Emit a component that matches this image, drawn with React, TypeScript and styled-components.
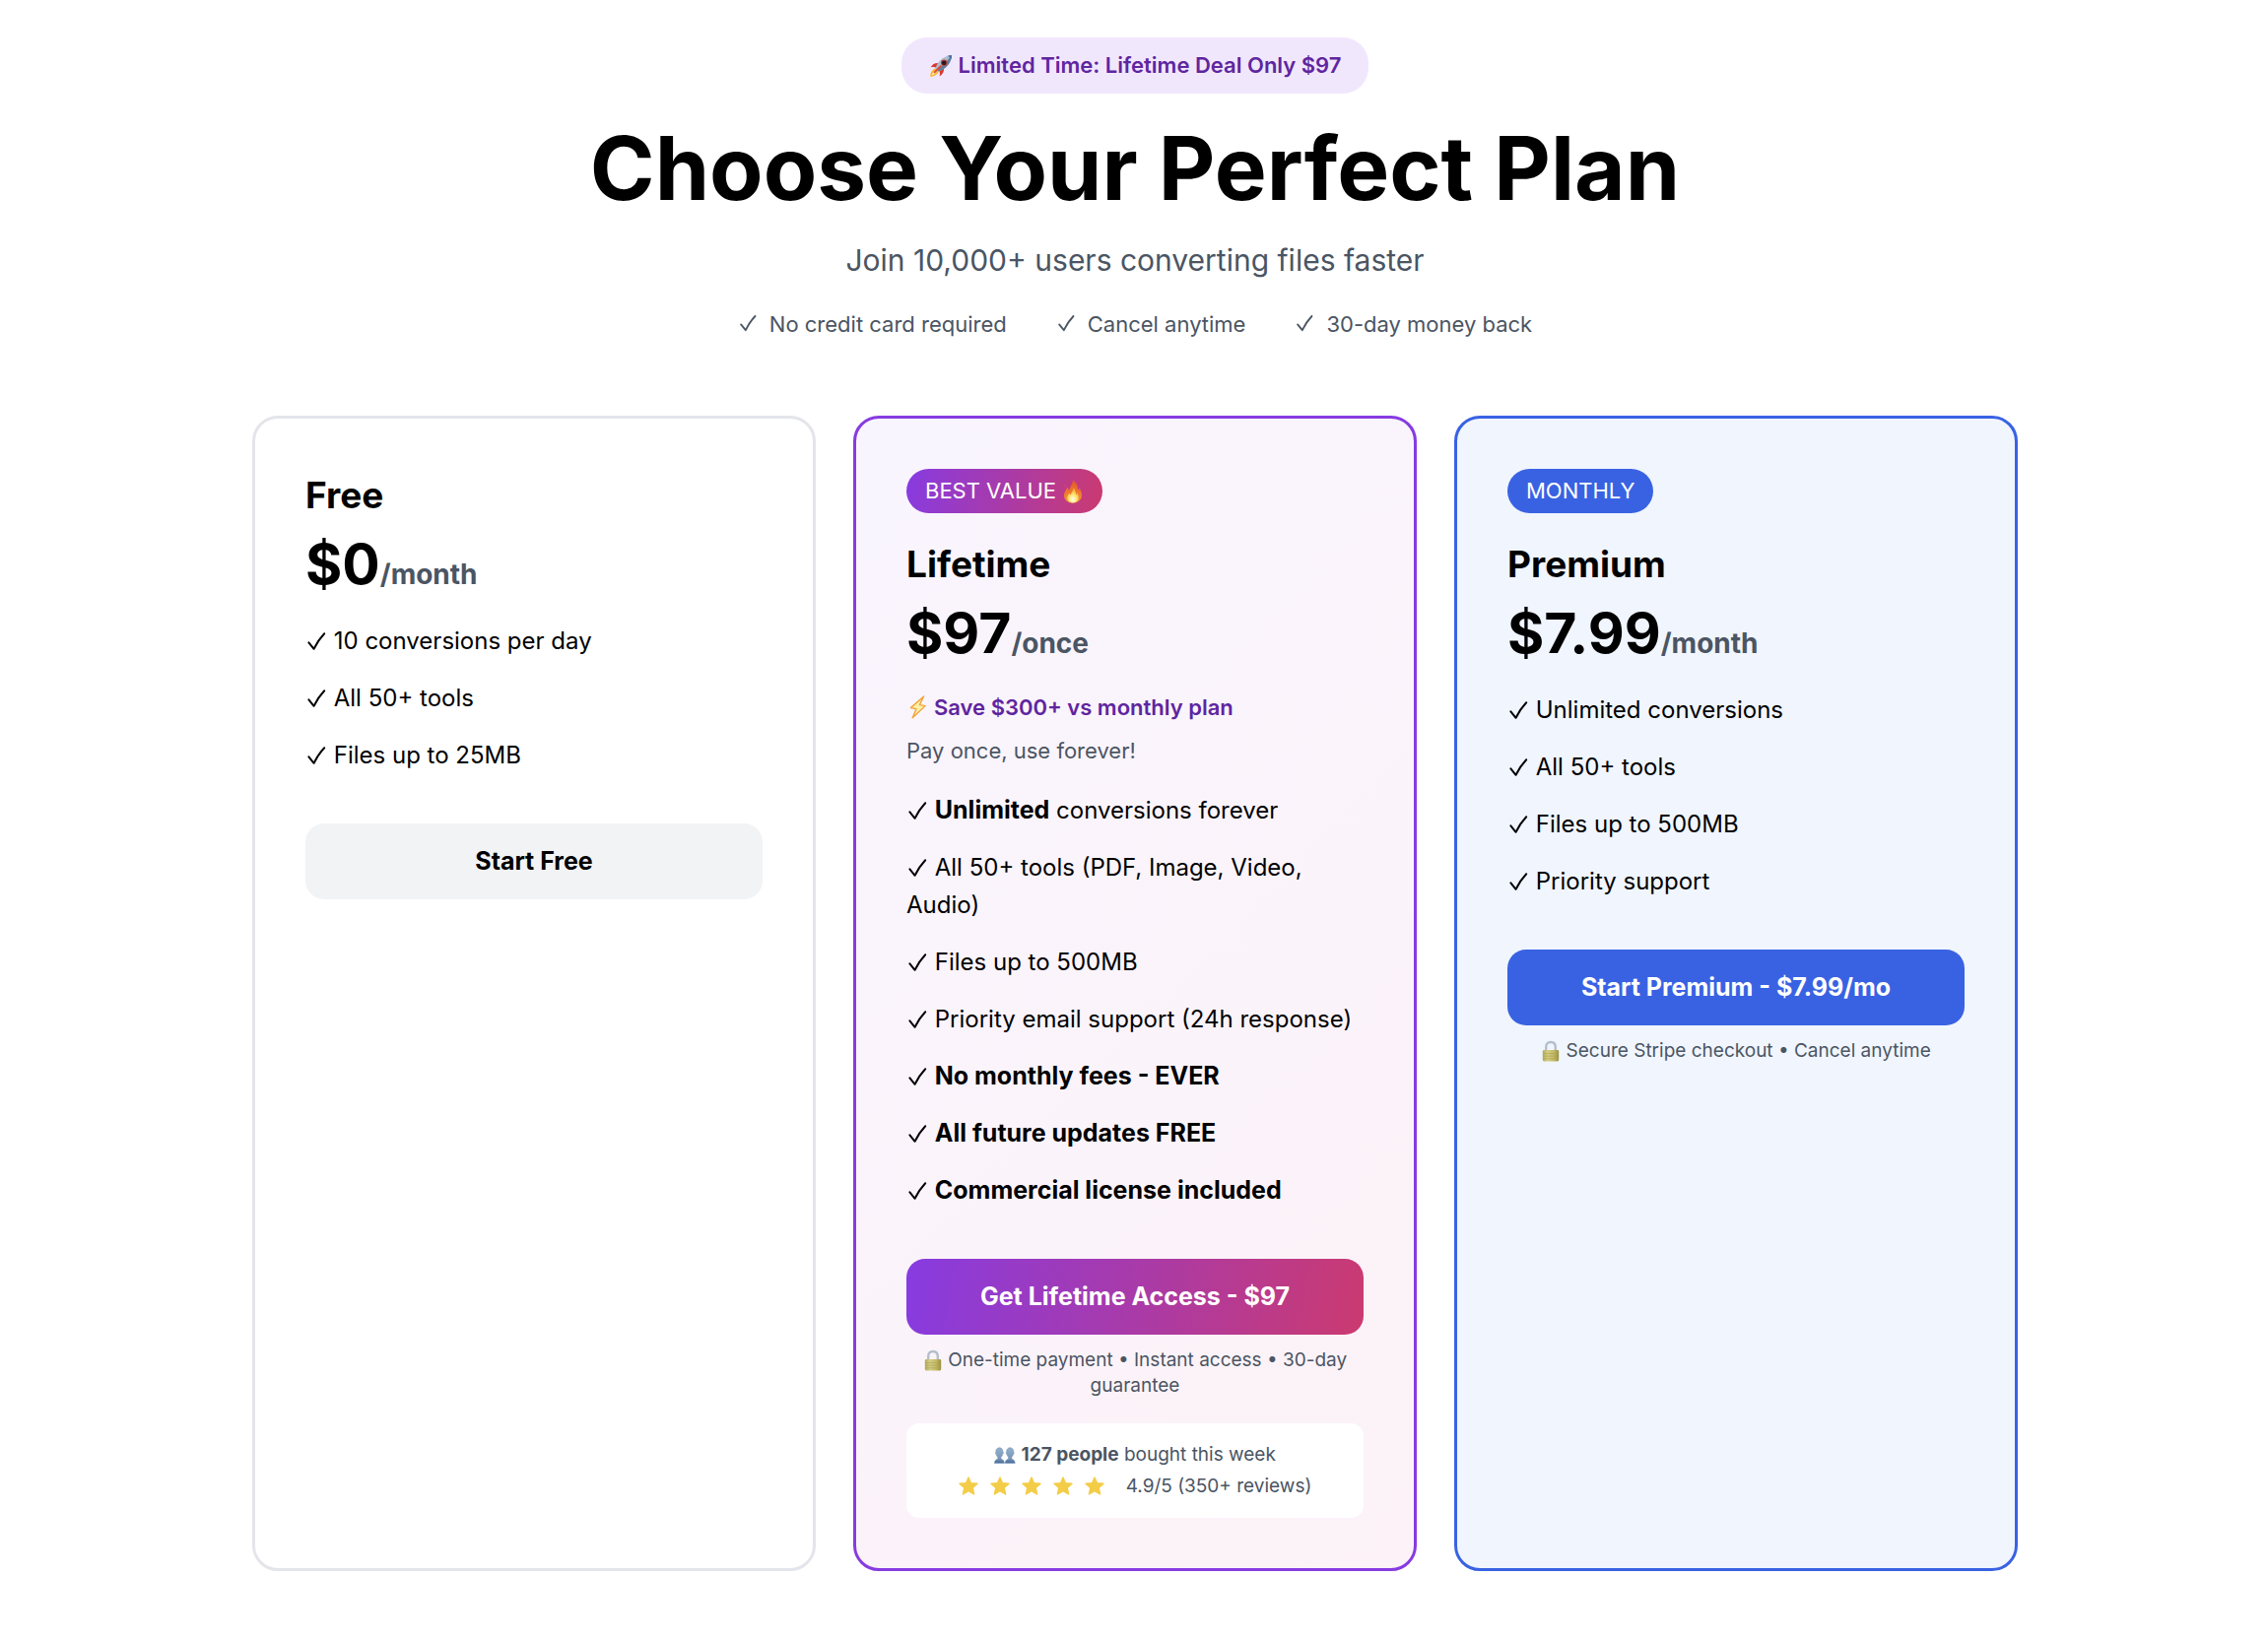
import React from 'react';
import styled, { createGlobalStyle, css } from 'styled-components';

const color = {
  ink: '#000000',
  muted: '#4b5563',
  purple: '#873be1',
  purpleDark: '#5f259f',
  purpleSoft: '#f1e7fd',
  pink: '#cb3a70',
  blue: '#3962e3',
  line: '#e4e5ea',
  grey: '#f2f3f5',
};

const brandGradient = `linear-gradient(100deg, ${color.purple} 0%, ${color.pink} 100%)`;

const GlobalStyle = createGlobalStyle`
  *, *::before, *::after { box-sizing: border-box; }
  body {
    margin: 0;
    background: #ffffff;
    color: ${color.ink};
    font-family: Inter, "Noto Sans", sans-serif;
  }
  h1, h2, p, ul { margin: 0; padding: 0; }
`;

/* ---------- icons ---------- */

const Glyph = styled.svg<{ $w: number; $h: number }>`
  width: ${(p) => p.$w}px;
  height: ${(p) => p.$h}px;
  flex: none;
  vertical-align: middle;
  overflow: visible;
`;

function Check({ size = 22 }: { size?: number }) {
  return (
    <Glyph $w={size} $h={size} viewBox="0 0 22 22" aria-hidden="true">
      <path
        d="M3.4 11.4 L8.6 17.8 C11.6 11.6 14.6 7 19.2 2.2"
        fill="none"
        stroke="currentColor"
        strokeWidth="2"
        strokeLinecap="round"
        strokeLinejoin="round"
      />
    </Glyph>
  );
}

function Rocket() {
  return (
    <Glyph $w={24} $h={24} viewBox="0 0 24 24" aria-hidden="true">
      <path d="M6.6 14.2 C3.4 15.4 1.2 18.6 1.2 22.8 C5.4 22.6 8.6 20.6 9.8 17.4 Z" fill="#f6b32f" />
      <path d="M6.4 16.4 C4.6 17.4 3 19.4 2.6 21.6 C4.8 21 6.8 19.6 7.8 17.8 Z" fill="#fdf0a0" />
      <path d="M9.4 9 C6.4 8.6 3.4 10 1.6 13.4 C3.8 12.8 5.8 13 7.4 13.8 Z" fill="#d8392f" />
      <path d="M15 14.6 C15.4 17.6 14 20.6 10.6 22.4 C11.2 20.2 11 18.2 10.2 16.6 Z" fill="#d8392f" />
      <path d="M6.6 14.2 C8.6 8 13.4 2.6 20.2 1.4 C21.6 1.2 22.8 1 22.8 1.2 C23 1.4 22.8 2.6 22.6 3.8 C21.4 10.6 16 15.4 9.8 17.4 Z" fill="#a9bccd" />
      <path d="M8.2 15.8 C12.8 12.6 18 7.6 22.8 1.2 C23 1.4 22.8 2.6 22.6 3.8 C21.4 10.6 16 15.4 9.8 17.4 Z" fill="#5f7f9f" />
      <path d="M18.4 1.8 C20.8 1 22.8 1 22.8 1.2 C23 1.4 23 3.4 22.2 5.6 C21.6 3.8 20.2 2.4 18.4 1.8 Z" fill="#4a6f9c" />
      <circle cx="15.2" cy="8.8" r="3.3" fill="#c8453c" />
      <circle cx="15.2" cy="8.8" r="2.4" fill="#2a1a1e" />
      <path d="M5.6 18.4 L11.8 12.2" stroke="#e2412f" strokeWidth="1.8" strokeLinecap="round" />
    </Glyph>
  );
}

function Fire() {
  return (
    <Glyph $w={22} $h={26} viewBox="0 0 22 26" aria-hidden="true">
      <defs>
        <linearGradient id="flame" x1="0" y1="0" x2="0" y2="1">
          <stop offset="0" stopColor="#e0562b" />
          <stop offset="0.55" stopColor="#ee7a2c" />
          <stop offset="1" stopColor="#f29a35" />
        </linearGradient>
        <radialGradient id="core" cx="0.5" cy="0.78" r="0.6">
          <stop offset="0" stopColor="#fffdf0" />
          <stop offset="0.5" stopColor="#fce97c" />
          <stop offset="1" stopColor="#f8b93c" />
        </radialGradient>
      </defs>
      <path
        d="M11.2 1.2 C10.8 4 9.6 6.2 8.4 8.4 C7.8 9.6 7.4 10.6 7.2 11.8 C6.4 11 6 9.8 6 8.4 C4 10.6 2 13.8 2 17 C2 21.6 5.8 24.6 10.8 24.6 C16 24.6 20 21.6 20 16.8 C20 13.8 18.6 11.6 17.8 9.2 C17.2 10.4 17 11 16.2 11.8 C16 7.6 14.8 3.8 11.2 1.2 Z"
        fill="url(#flame)"
      />
      <path d="M3 5.6 C2.2 6.8 2.4 8 3.2 9 C3.8 7.8 3.8 6.8 3 5.6 Z" fill="#d9543a" />
      <path
        d="M11.6 9.4 C11.6 12.4 9.2 13.4 8.8 16.4 C8 16 7.6 15.2 7.4 14.4 C6 16 5.2 17.6 5.2 19.4 C5.2 22.4 7.8 24.4 11 24.4 C14.2 24.4 16.8 22.4 16.8 19.2 C16.8 17.4 16 16 15.4 14.6 C15 15.6 14.6 16 14 16.4 C14.2 13.6 13.4 11.2 11.6 9.4 Z"
        fill="url(#core)"
      />
    </Glyph>
  );
}

function Bolt() {
  return (
    <Glyph $w={22} $h={26} viewBox="0 0 22 26" aria-hidden="true">
      <path
        d="M17.6 2 L4.4 13.6 L10 14.8 L6.2 23.8 L19.2 11.6 L13.4 10.6 Z"
        fill="#fdf0a8"
        stroke="#f0a63c"
        strokeWidth="1.4"
        strokeLinejoin="round"
      />
    </Glyph>
  );
}

function Lock() {
  return (
    <Glyph $w={20} $h={22} viewBox="0 0 20 22" aria-hidden="true">
      <defs>
        <linearGradient id="brass" x1="0" y1="0" x2="1" y2="0">
          <stop offset="0" stopColor="#b3a95a" />
          <stop offset="0.3" stopColor="#d5cf86" />
          <stop offset="0.7" stopColor="#c2b965" />
          <stop offset="1" stopColor="#99903f" />
        </linearGradient>
      </defs>
      <path
        d="M5.2 11 V6 C5.2 2.6 7.2 1 10 1 C12.8 1 14.8 2.6 14.8 6 V11"
        fill="none"
        stroke="#b4bfcb"
        strokeWidth="2.4"
      />
      <rect x="1.8" y="9" width="16.4" height="11.4" rx="1.4" fill="url(#brass)" />
      <path d="M2.4 12.6 H17.6 M2.4 15.2 H17.6 M2.4 17.8 H17.6" stroke="#a79d4e" strokeWidth="0.6" />
    </Glyph>
  );
}

function People() {
  const bust =
    'M5.4 0.8 C7.8 0.8 9 2.6 9 5.2 C9.6 5.4 9.4 7.4 8.6 7.6 C8.2 9 7.6 9.8 7 10.4 V12 C8 12.8 10.4 13 10.4 16.6 H0.4 C0.4 13 2.8 12.8 3.8 12 V10.4 C3.2 9.8 2.6 9 2.2 7.6 C1.4 7.4 1.2 5.4 1.8 5.2 C1.8 2.6 3 0.8 5.4 0.8 Z';
  return (
    <Glyph $w={22} $h={18} viewBox="0 0 22 18" aria-hidden="true">
      <defs>
        <linearGradient id="bust" x1="0" y1="0" x2="0" y2="1">
          <stop offset="0" stopColor="#94b0cd" />
          <stop offset="0.7" stopColor="#7896b8" />
          <stop offset="1" stopColor="#426898" />
        </linearGradient>
      </defs>
      <path d={bust} fill="url(#bust)" stroke="#7896b8" strokeWidth="0.6" />
      <path d={bust} fill="url(#bust)" stroke="#7896b8" strokeWidth="0.6" transform="translate(10.8 0)" />
    </Glyph>
  );
}

function Star() {
  return (
    <Glyph $w={20} $h={20} viewBox="0 0 20 20" aria-hidden="true">
      <path
        d="M10 1 L12.5 6.8 L19 7.2 L14.2 11.4 L15.6 18 L10 14.6 L4.4 18 L5.8 11.4 L1 7.2 L7.5 6.8 Z"
        fill="#f3cd47"
        stroke="#f3cd47"
        strokeWidth="1.4"
        strokeLinejoin="round"
      />
    </Glyph>
  );
}

/* ---------- header ---------- */

const Page = styled.main`
  max-width: 1858px;
  margin: 0 auto;
  padding: 38px 32px 72px 34px;
`;

const Header = styled.header`
  display: flex;
  flex-direction: column;
  align-items: center;
  text-align: center;
  margin-bottom: 76px;
`;

const DealPill = styled.p`
  display: flex;
  align-items: center;
  gap: 6px;
  padding: 12px 28px;
  border-radius: 26px;
  background: ${color.purpleSoft};
  color: ${color.purpleDark};
  font-size: 22px;
  line-height: 33px;
  font-weight: 600;
`;

const Title = styled.h1`
  margin-top: 26px;
  font-size: 89px;
  line-height: 99px;
  font-weight: 700;
`;

const Subtitle = styled.p`
  margin-top: 20px;
  font-size: 30px;
  line-height: 48px;
  color: ${color.muted};
`;

const TrustList = styled.ul`
  display: flex;
  flex-wrap: wrap;
  justify-content: center;
  gap: 12px 50px;
  margin-top: 24px;
  list-style: none;
  font-size: 22px;
  line-height: 34px;
  color: ${color.muted};
`;

const TrustItem = styled.li`
  display: flex;
  align-items: center;
  gap: 12px;
`;

/* ---------- plans ---------- */

type Tone = 'plain' | 'brand' | 'blue';

const Plans = styled.section`
  display: grid;
  grid-template-columns: repeat(3, minmax(0, 1fr));
  gap: 38px;

  @media (max-width: 1400px) {
    grid-template-columns: minmax(0, 1fr);
  }
`;

const cardTone = {
  plain: css`
    border-color: ${color.line};
    background: #ffffff;
  `,
  brand: css`
    border-color: ${color.purple};
    background: linear-gradient(135deg, #f9f5fe 0%, #fcf2f7 100%);
  `,
  blue: css`
    border-color: ${color.blue};
    background: #f0f5fe;
  `,
};

const Card = styled.article<{ $tone: Tone }>`
  padding: 51px;
  border: 3px solid;
  border-radius: 26px;
  ${(p) => cardTone[p.$tone]}
`;

const Badge = styled.p<{ $tone: Tone }>`
  display: flex;
  align-items: center;
  gap: 6px;
  width: fit-content;
  margin-bottom: 25px;
  padding: 0 19px;
  border-radius: 26px;
  background: ${(p) => (p.$tone === 'brand' ? brandGradient : color.blue)};
  color: #ffffff;
  font-size: 22px;
  line-height: 45px;
`;

const PlanName = styled.h2`
  font-size: 37px;
  line-height: 54px;
  font-weight: 700;
`;

const Price = styled.p`
  margin-bottom: 16px;
  font-size: 57px;
  line-height: 86px;
  font-weight: 700;
`;

const Period = styled.span`
  font-size: 28px;
  line-height: 1;
  color: ${color.muted};
`;

const Pitch = styled.div`
  display: flex;
  flex-direction: column;
  gap: 12px;
  margin-bottom: 26px;
  font-size: 22px;
  line-height: 32px;
  color: ${color.muted};
`;

const Saving = styled.p`
  display: flex;
  align-items: center;
  gap: 6px;
  color: ${color.purpleDark};
  font-weight: 600;
`;

const Features = styled.ul`
  display: flex;
  flex-direction: column;
  gap: 20px;
  margin-bottom: 50px;
  list-style: none;
  font-size: 24px;
  line-height: 38px;

  strong {
    font-size: 25px;
    line-height: 1;
    font-weight: 700;
  }
`;

const buttonTone = {
  plain: css`
    background: ${color.grey};
    color: ${color.ink};
  `,
  brand: css`
    background: ${brandGradient};
    color: #ffffff;
  `,
  blue: css`
    background: ${color.blue};
    color: #ffffff;
  `,
};

const Action = styled.button<{ $tone: Tone }>`
  display: block;
  width: 100%;
  padding: 19px;
  border: 0;
  border-radius: 19px;
  font-family: inherit;
  font-size: 25px;
  line-height: 39px;
  font-weight: 700;
  cursor: pointer;
  ${(p) => buttonTone[p.$tone]}
`;

const Note = styled.p`
  margin-top: 13px;
  font-size: 19px;
  line-height: 26px;
  text-align: center;
  color: ${color.muted};
`;

const Proof = styled.div`
  margin-top: 25px;
  padding: 16px;
  border-radius: 13px;
  background: #ffffff;
  font-size: 19px;
  line-height: 32px;
  text-align: center;
  color: ${color.muted};
`;

const Rating = styled.p`
  display: flex;
  align-items: center;
  justify-content: center;
  gap: 22px;
`;

const Stars = styled.span`
  display: flex;
  gap: 12px;
`;

function FeatureList({ items }: { items: React.ReactNode[] }) {
  return (
    <Features>
      {items.map((item, i) => (
        <li key={i}>
          <Check /> {item}
        </li>
      ))}
    </Features>
  );
}

export default function App() {
  return (
    <>
      <GlobalStyle />
      <Page>
        <Header>
          <DealPill>
            <Rocket />
            Limited Time: Lifetime Deal Only $97
          </DealPill>
          <Title>Choose Your Perfect Plan</Title>
          <Subtitle>Join 10,000+ users converting files faster</Subtitle>
          <TrustList>
            {['No credit card required', 'Cancel anytime', '30-day money back'].map((text) => (
              <TrustItem key={text}>
                <Check size={20} />
                {text}
              </TrustItem>
            ))}
          </TrustList>
        </Header>

        <Plans>
          <Card $tone="plain">
            <PlanName>Free</PlanName>
            <Price>
              $0<Period>/month</Period>
            </Price>
            <FeatureList items={['10 conversions per day', 'All 50+ tools', 'Files up to 25MB']} />
            <Action type="button" $tone="plain">
              Start Free
            </Action>
          </Card>

          <Card $tone="brand">
            <Badge $tone="brand">
              BEST VALUE
              <Fire />
            </Badge>
            <PlanName>Lifetime</PlanName>
            <Price>
              $97<Period>/once</Period>
            </Price>
            <Pitch>
              <Saving>
                <Bolt />
                Save $300+ vs monthly plan
              </Saving>
              <p>Pay once, use forever!</p>
            </Pitch>
            <FeatureList
              items={[
                <>
                  <strong>Unlimited</strong> conversions forever
                </>,
                'All 50+ tools (PDF, Image, Video, Audio)',
                'Files up to 500MB',
                'Priority email support (24h response)',
                <strong>No monthly fees - EVER</strong>,
                <strong>All future updates FREE</strong>,
                <strong>Commercial license included</strong>,
              ]}
            />
            <Action type="button" $tone="brand">
              Get Lifetime Access - $97
            </Action>
            <Note>
              <Lock /> One-time payment • Instant access • 30-day guarantee
            </Note>
            <Proof>
              <p>
                <People /> <strong>127 people</strong> bought this week
              </p>
              <Rating>
                <Stars>
                  {[1, 2, 3, 4, 5].map((n) => (
                    <Star key={n} />
                  ))}
                </Stars>
                4.9/5 (350+ reviews)
              </Rating>
            </Proof>
          </Card>

          <Card $tone="blue">
            <Badge $tone="blue">MONTHLY</Badge>
            <PlanName>Premium</PlanName>
            <Price>
              $7.99<Period>/month</Period>
            </Price>
            <FeatureList
              items={['Unlimited conversions', 'All 50+ tools', 'Files up to 500MB', 'Priority support']}
            />
            <Action type="button" $tone="blue">
              Start Premium - $7.99/mo
            </Action>
            <Note>
              <Lock /> Secure Stripe checkout • Cancel anytime
            </Note>
          </Card>
        </Plans>
      </Page>
    </>
  );
}
